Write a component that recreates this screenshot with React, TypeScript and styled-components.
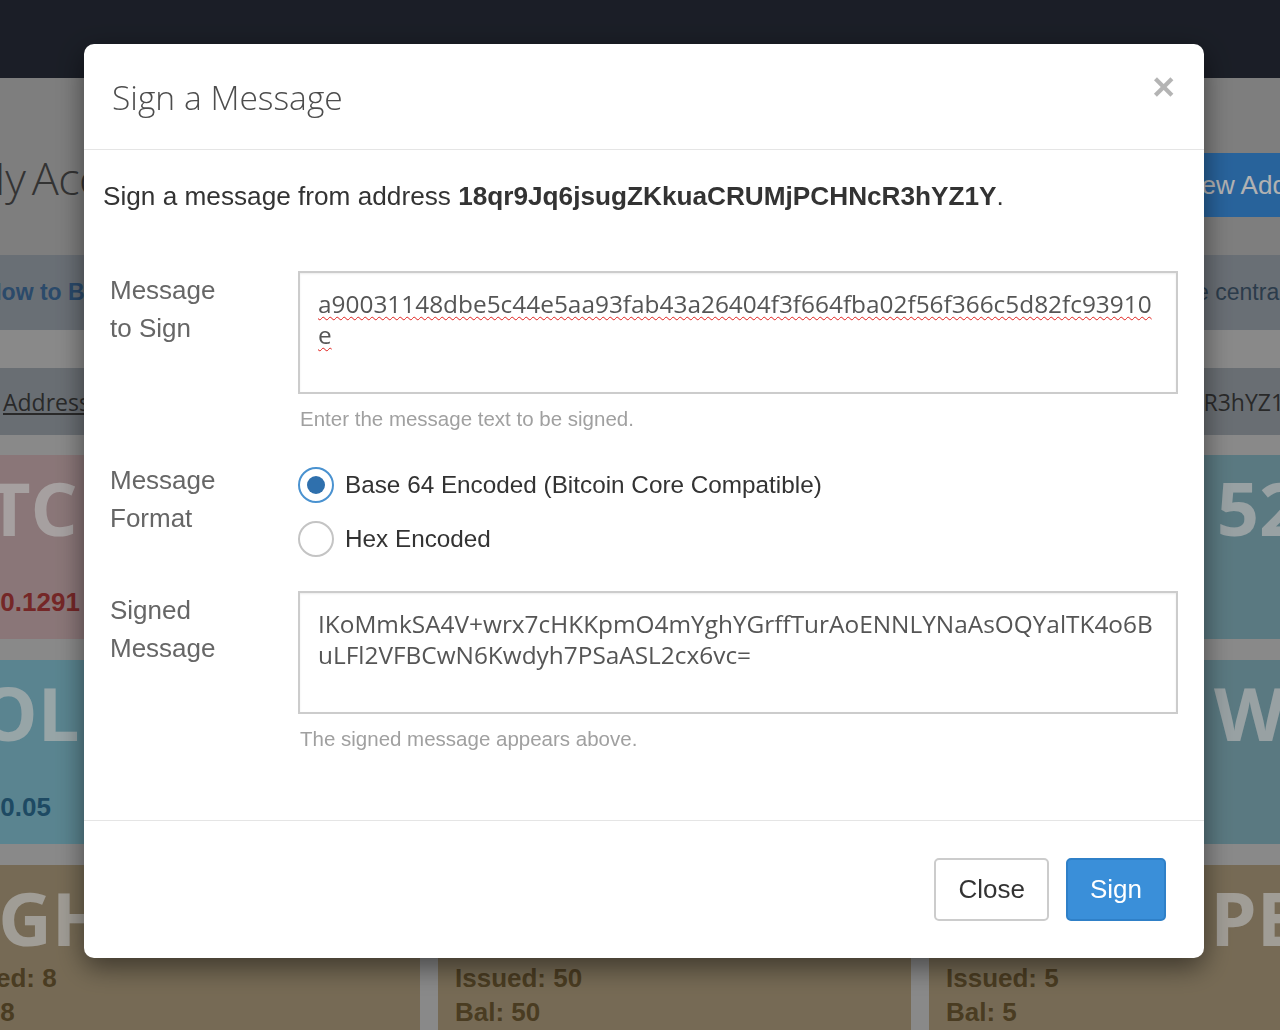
import React from 'react'
import styled, { createGlobalStyle } from 'styled-components'

const GlobalStyle = createGlobalStyle`
  html, body {
    margin: 0;
    padding: 0;
  }
  body {
    width: 1280px;
    height: 1030px;
    overflow: hidden;
    background: #c5c5c5;
    font-family: "Liberation Sans", Arial, sans-serif;
    color: #333;
  }
  * {
    box-sizing: border-box;
  }
`

// ---- the accounts page behind the dialog ----

const Page = styled.div`
  height: 1030px;
  overflow: hidden;
`

const Navbar = styled.nav`
  height: 78px;
  background: #272c38;
`

const Hero = styled.header`
  height: 177px;
  background: #b5b5b5;
`

const Container = styled.div`
  width: 1476px;
  margin-left: -73px;
`

const TitleRow = styled(Container)`
  display: flex;
  justify-content: space-between;
  align-items: flex-start;
  padding: 75px 45px 0 40px;
`

const PageTitle = styled.h1`
  margin: -2px 0 0;
  font-family: "Open Sans", sans-serif;
  font-weight: 300;
  font-size: 45px;
  line-height: 54px;
  letter-spacing: -0.5px;
  word-spacing: -5px;
  color: #4a4a4a;
`

const NewButton = styled.button`
  height: 64px;
  padding: 0 22px;
  border: 0;
  border-radius: 5px;
  background: #3a8edf;
  color: #fff;
  font-family: "Liberation Sans", Arial, sans-serif;
  font-size: 26px;
`

const InfoAlert = styled.div`
  height: 75px;
  margin-bottom: 38px;
  padding: 0 42px 0 58px;
  display: flex;
  justify-content: space-between;
  align-items: center;
  background: #979fa8;
  font-size: 23px;
  color: #3f566c;

  strong {
    color: #3e6a99;
  }
`

const AddressWell = styled.div`
  height: 67px;
  margin-bottom: 20px;
  padding: 0 106px 0 76px;
  display: flex;
  justify-content: space-between;
  align-items: center;
  background: #979ea5;
  font-family: "Open Sans", sans-serif;
  font-size: 23px;
  color: #3c3c3c;

  a {
    color: #3c3c3c;
    text-decoration: underline;
  }
`

const CardGrid = styled(Container)`
  display: grid;
  grid-template-columns: 493px 473px 1fr;
  gap: 21px 18px;
`

const tones = {
  red: { bg: '#c6aaac', fg: '#a83838' },
  blue: { bg: '#81bece', fg: '#2c6a8e' },
  teal: { bg: '#82aeb9', fg: '#2f6470' },
  tan: { bg: '#aa997a', fg: '#6b5731' },
}

type Tone = keyof typeof tones

const Card = styled.div<{ $tone: Tone }>`
  padding: 10px 17px 20px;
  background: ${(p) => tones[p.$tone].bg};
  color: ${(p) => tones[p.$tone].fg};
`

const Ticker = styled.div<{ $end?: boolean }>`
  font-family: "Open Sans", sans-serif;
  font-weight: 700;
  font-size: 74px;
  line-height: 86px;
  color: rgba(255, 255, 255, 0.7);
  text-align: ${(p) => (p.$end ? 'right' : 'left')};
  margin: ${(p) => (p.$end ? '0' : '0 0 0 -6px')};
`

const Stat = styled.div`
  min-height: 34px;
  font-weight: 700;
  font-size: 26px;
  line-height: 34px;
`

// ---- the dialog ----

const Backdrop = styled.div`
  position: fixed;
  inset: 0;
  background: rgba(0, 0, 0, 0.3);
`

const ModalLayer = styled.div`
  position: fixed;
  inset: 0;
  padding: 44px 0 0 84px;
`

const Dialog = styled.div`
  width: 1120px;
  background: #fff;
  border-radius: 10px;
  box-shadow: 0 9px 28px rgba(0, 0, 0, 0.5);
`

const DialogHeader = styled.div`
  height: 106px;
  padding: 0 29px 0 28px;
  display: flex;
  justify-content: space-between;
  align-items: center;
  border-bottom: 1px solid #e5e5e5;
`

const DialogTitle = styled.h4`
  margin: 1px 0 0;
  font-family: "Open Sans", sans-serif;
  font-weight: 300;
  font-size: 33.6px;
  line-height: 1.1;
  color: #4d4d4d;
`

const CloseX = styled.button`
  align-self: flex-start;
  margin-top: 23px;
  padding: 0;
  border: 0;
  background: none;
  font-family: "Liberation Sans", Arial, sans-serif;
  font-weight: 700;
  font-size: 39px;
  line-height: 1;
  color: #000;
  opacity: 0.29;
`

const DialogBody = styled.div`
  padding: 28px 26px 69px 19px;
`

const Intro = styled.p`
  margin: 0 0 56px;
  font-size: 26.2px;
  line-height: 37px;
  color: #333;
`

const FormRow = styled.div<{ $top?: number }>`
  display: grid;
  grid-template-columns: 188px 1fr;
  margin: ${(p) => p.$top ?? 0}px 0 0 7px;
`

const FieldLabel = styled.label`
  font-size: 26px;
  line-height: 38px;
  color: #666;
`

const TextBox = styled.div`
  height: 123px;
  padding: 15px 18px;
  border: 2px solid #ccc;
  box-shadow: inset 0 1px 2px rgba(0, 0, 0, 0.075);
  font-family: "Open Sans", sans-serif;
  font-size: 24.4px;
  line-height: 31px;
  color: #555;
  white-space: nowrap;
`

const Misspelt = styled.span`
  text-decoration: underline wavy #e0201c;
  text-decoration-thickness: 1px;
  text-underline-offset: 3px;
`

const HelpText = styled.div`
  margin-top: 13px;
  padding-left: 2px;
  font-size: 20.5px;
  line-height: 24px;
  color: #a0a0a0;
`

const RadioList = styled.div`
  display: flex;
  flex-direction: column;
  gap: 6px;
`

const RadioOption = styled.label`
  height: 48px;
  display: flex;
  align-items: center;
  gap: 11px;
  font-size: 24.3px;
  color: #333;
`

const RadioCircle = styled.span<{ $checked?: boolean }>`
  width: 36px;
  height: 36px;
  border-radius: 50%;
  border: 2px solid ${(p) => (p.$checked ? '#4a92d0' : '#c4c4c4')};
  display: grid;
  place-items: center;

  &::after {
    content: '';
    width: 18px;
    height: 18px;
    border-radius: 50%;
    background: ${(p) => (p.$checked ? '#2f70ad' : 'transparent')};
  }
`

const DialogFooter = styled.div`
  height: 138px;
  padding-right: 38px;
  display: flex;
  justify-content: flex-end;
  align-items: center;
  gap: 17px;
  border-top: 1px solid #e5e5e5;
`

const Button = styled.button<{ $primary?: boolean }>`
  height: 63px;
  padding: 0 22px;
  border-radius: 5px;
  border: 2px solid ${(p) => (p.$primary ? '#2f80c8' : '#cccccc')};
  background: ${(p) => (p.$primary ? '#3a8fd9' : '#fff')};
  color: ${(p) => (p.$primary ? '#fff' : '#333')};
  font-family: "Liberation Sans", Arial, sans-serif;
  font-size: 26px;
`

const address = '18qr9Jq6jsugZKkuaCRUMjPCHNcR3hYZ1Y'

const cards: { ticker: string; tone: Tone; issued?: string; bal?: string; end?: boolean }[] = [
  { ticker: 'BTC', tone: 'red', bal: '0.1291' },
  { ticker: 'XCP', tone: 'red', bal: '0.0012' },
  { ticker: '5200', tone: 'teal', issued: '5200', bal: '5200', end: true },
  { ticker: 'SOL', tone: 'blue', bal: '0.05' },
  { ticker: 'LTC', tone: 'blue', bal: '1.2' },
  { ticker: 'WAX', tone: 'teal', issued: '10', bal: '10', end: true },
  { ticker: 'NGH', tone: 'tan', issued: '8', bal: '8' },
  { ticker: 'RARE', tone: 'tan', issued: '50', bal: '50' },
  { ticker: 'PEPE', tone: 'tan', issued: '5', bal: '5', end: true },
]

const App = () => {
  return (
    <>
      <GlobalStyle />
      <Page>
        <Navbar />
        <Hero>
          <TitleRow>
            <PageTitle>My Accounts</PageTitle>
            <NewButton>New Address</NewButton>
          </TitleRow>
        </Hero>
        <Container>
          <InfoAlert>
            <strong>How to Buy</strong>
            <span>Buy tokens with BTC on the central market</span>
          </InfoAlert>
          <AddressWell>
            <a href="#">Address</a>
            <span>{address}</span>
          </AddressWell>
        </Container>
        <CardGrid>
          {cards.map((card, index) => (
            <Card key={index} $tone={card.tone}>
              <Ticker $end={card.end}>{card.ticker}</Ticker>
              <Stat>{card.issued ? `Issued: ${card.issued}` : '\u00a0'}</Stat>
              <Stat>Bal: {card.bal}</Stat>
            </Card>
          ))}
        </CardGrid>
      </Page>

      <Backdrop />
      <ModalLayer>
        <Dialog role="dialog">
          <DialogHeader>
            <DialogTitle>Sign a Message</DialogTitle>
            <CloseX aria-label="Close">×</CloseX>
          </DialogHeader>

          <DialogBody>
            <Intro>
              Sign a message from address <strong>{address}</strong>.
            </Intro>

            <FormRow>
              <FieldLabel>Message<br />to Sign</FieldLabel>
              <div>
                <TextBox role="textbox">
                  <Misspelt>a90031148dbe5c44e5aa93fab43a26404f3f664fba02f56f366c5d82fc93910</Misspelt>
                  <br />
                  <Misspelt>e</Misspelt>
                </TextBox>
                <HelpText>Enter the message text to be signed.</HelpText>
              </div>
            </FormRow>

            <FormRow $top={30}>
              <FieldLabel>Message<br />Format</FieldLabel>
              <RadioList>
                <RadioOption>
                  <RadioCircle $checked />
                  Base 64 Encoded (Bitcoin Core Compatible)
                </RadioOption>
                <RadioOption>
                  <RadioCircle />
                  Hex Encoded
                </RadioOption>
              </RadioList>
            </FormRow>

            <FormRow $top={28}>
              <FieldLabel>Signed<br />Message</FieldLabel>
              <div>
                <TextBox role="textbox">
                  IKoMmkSA4V+wrx7cHKKpmO4mYghYGrffTurAoENNLYNaAsOQYalTK4o6B
                  <br />
                  uLFl2VFBCwN6Kwdyh7PSaASL2cx6vc=
                </TextBox>
                <HelpText>The signed message appears above.</HelpText>
              </div>
            </FormRow>
          </DialogBody>

          <DialogFooter>
            <Button>Close</Button>
            <Button $primary>Sign</Button>
          </DialogFooter>
        </Dialog>
      </ModalLayer>
    </>
  )
}

export default App
